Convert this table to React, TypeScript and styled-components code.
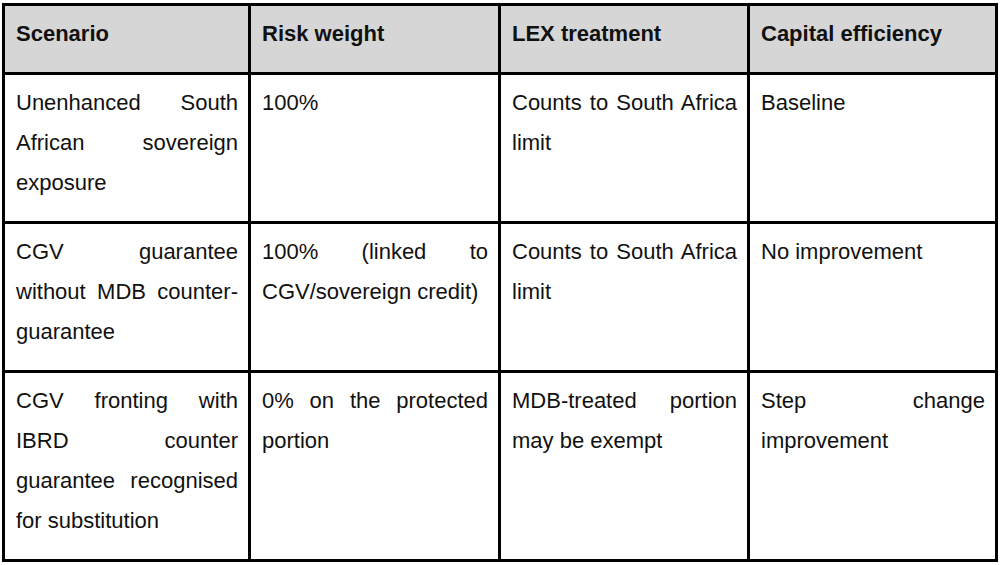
import React from "react";
import styled, { createGlobalStyle } from "styled-components";

const GlobalStyle = createGlobalStyle`
  html, body {
    margin: 0;
    padding: 0;
    background: #ffffff;
  }
  body {
    font-family: "Liberation Sans", Arial, sans-serif;
    color: #111111;
  }
`;

const Page = styled.main`
  padding: 3px 2px 0 2px;
`;

const Table = styled.div`
  display: grid;
  width: 996px;
  grid-template-columns: 243px 247px 246px 245px;
  grid-auto-rows: auto;
  gap: 3px;
  padding: 3px;
  box-sizing: border-box;
  background: #000000;
`;

const Cell = styled.div<{ $header?: boolean }>`
  background: ${(p) => (p.$header ? "#d6d6d6" : "#ffffff")};
  padding: 8px 10px 18px 11px;
  font-size: 22px;
  line-height: 40px;
  font-weight: ${(p) => (p.$header ? 700 : 400)};
  text-align: ${(p) => (p.$header ? "left" : "justify")};
  color: #111111;
`;

const headers = ["Scenario", "Risk weight", "LEX treatment", "Capital efficiency"];

const rows: string[][] = [
  [
    "Unenhanced South African sovereign exposure",
    "100%",
    "Counts to South Africa limit",
    "Baseline",
  ],
  [
    "CGV guarantee without MDB counter-guarantee",
    "100% (linked to CGV/sovereign credit)",
    "Counts to South Africa limit",
    "No improvement",
  ],
  [
    "CGV fronting with IBRD counter guarantee recognised for substitution",
    "0% on the protected portion",
    "MDB-treated portion may be exempt",
    "Step change improvement",
  ],
];

export default function App() {
  return (
    <>
      <GlobalStyle />
      <Page>
        <Table role="table">
          {headers.map((h) => (
            <Cell $header key={h} role="columnheader">
              {h}
            </Cell>
          ))}
          {rows.map((r, i) =>
            r.map((c, j) => (
              <Cell key={`${i}-${j}`} role="cell">
                {c}
              </Cell>
            ))
          )}
        </Table>
      </Page>
    </>
  );
}
